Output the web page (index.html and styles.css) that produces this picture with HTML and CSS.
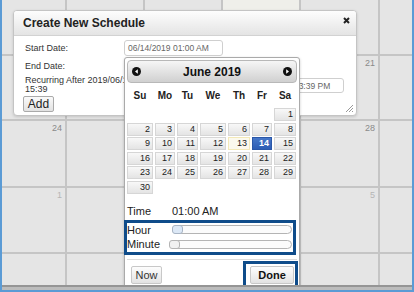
FILE: index.html
```html
<!DOCTYPE html>
<html lang="en">
<head>
    <meta charset="UTF-8">
    <title>Create New Schedule</title>
    <link rel="stylesheet" href="styles.css">
</head>
<body>
    <div class="screen">
        <!-- Calendrier du mois en fond -->
        <div class="month-grid">
            <div class="cell"></div><div class="cell"></div><div class="cell"></div><div class="cell today"></div><div class="cell"></div><div class="cell"></div>
            <div class="cell"></div><div class="cell"></div><div class="cell"></div><div class="cell"></div><div class="cell">21</div><div class="cell"></div>
            <div class="cell">24</div><div class="cell"></div><div class="cell"></div><div class="cell"></div><div class="cell">28</div><div class="cell"></div>
            <div class="cell muted">1</div><div class="cell"></div><div class="cell"></div><div class="cell"></div><div class="cell muted">5</div><div class="cell"></div>
            <div class="cell"></div><div class="cell"></div><div class="cell"></div><div class="cell"></div><div class="cell"></div><div class="cell"></div>
        </div>
        <div class="bottom-bar"></div>

        <!-- Dialogue -->
        <div class="dialog">
            <div class="dialog-title">
                <span>Create New Schedule</span>
                <svg class="close" width="7" height="7" viewBox="0 0 7 7"><path d="M1 1L6 6M6 1L1 6" stroke="#222" stroke-width="2"/></svg>
            </div>
            <div class="dialog-body">
                <div class="form-row">
                    <label>Start Date:</label>
                    <div class="input">06/14/2019 01:00 AM</div>
                </div>
                <div class="form-row">
                    <label>End Date:</label>
                    <div class="input"></div>
                </div>
                <div class="form-row recurring">
                    <label>Recurring After 2019/06/14 15:39</label>
                    <div class="input small">06/14/2019 03:39 PM</div>
                </div>
                <button class="add-btn">Add</button>
            </div>
            <svg class="grip" width="8" height="8" viewBox="0 0 8 8"><path d="M8 1L1 8M8 4L4 8M8 7L7 8" stroke="#999" stroke-width="1"/></svg>
        </div>

        <!-- Datepicker -->
        <div class="datepicker">
            <div class="dp-header">
                <svg width="9" height="9" viewBox="0 0 9 9"><circle cx="4.5" cy="4.5" r="4.5" fill="#111"/><path d="M5.8 2.3L3 4.5L5.8 6.7Z" fill="#fff"/></svg>
                <span>June 2019</span>
                <svg width="9" height="9" viewBox="0 0 9 9"><circle cx="4.5" cy="4.5" r="4.5" fill="#111"/><path d="M3.2 2.3L6 4.5L3.2 6.7Z" fill="#fff"/></svg>
            </div>
            <div class="dp-weekdays">
                <span>Su</span><span>Mo</span><span>Tu</span><span>We</span><span>Th</span><span>Fr</span><span>Sa</span>
            </div>
            <div class="dp-days">
                <span class="empty"></span><span class="empty"></span><span class="empty"></span><span class="empty"></span><span class="empty"></span><span class="empty"></span><span>1</span>
                <span>2</span><span>3</span><span>4</span><span>5</span><span>6</span><span>7</span><span>8</span>
                <span>9</span><span>10</span><span>11</span><span>12</span><span class="today">13</span><span class="active">14</span><span>15</span>
                <span>16</span><span>17</span><span>18</span><span>19</span><span>20</span><span>21</span><span>22</span>
                <span>23</span><span>24</span><span>25</span><span>26</span><span>27</span><span>28</span><span>29</span>
                <span>30</span>
            </div>
            <div class="time-row">
                <span class="time-label">Time</span>
                <span>01:00 AM</span>
            </div>
            <div class="highlight sliders">
                <div class="slider-row">
                    <span class="time-label">Hour</span>
                    <div class="track"><span class="handle hour"></span></div>
                </div>
                <div class="slider-row">
                    <span class="time-label">Minute</span>
                    <div class="track"><span class="handle minute"></span></div>
                </div>
            </div>
            <div class="dp-buttons">
                <button class="dp-btn now">Now</button>
                <div class="highlight done-box">
                    <button class="dp-btn done">Done</button>
                </div>
            </div>
        </div>
    </div>
</body>
</html>
```

FILE: styles.css
```css
/* Styles globaux */
body, html {
    margin: 0;
    padding: 0;
    font-family: 'Liberation Sans', Arial, sans-serif;
    color: #222;
}

.screen {
    position: relative;
    width: 414px;
    height: 292px;
    box-sizing: border-box;
    border: 2px solid #5b9bd5;
    border-top: none;
    display: flex;
    flex-direction: column;
    overflow: hidden;
}

/* Calendrier en fond */
.month-grid {
    flex: 1;
    display: grid;
    grid-template-columns: 63px 76px 76px 76px 77px 1fr;
    grid-template-rows: 54px 63px 65px 64px 1fr;
    gap: 2px;
    background: #c5c5c5;
}

.cell {
    background: #e5e5e5;
    text-align: right;
    font-size: 9px;
    line-height: 10px;
    padding: 2px 3px 0 0;
    color: #8a8a8a;
}

.cell.today {
    background: #efefea;
}

.cell.muted {
    color: #b5b5b5;
}

.bottom-bar {
    position: relative;
    z-index: 5;
    height: 5px;
    box-sizing: border-box;
    border-top: 2px solid #959595;
    background: #bcbcbc;
}

/* Dialogue */
.dialog {
    position: absolute;
    left: 11px;
    top: 10px;
    width: 344px;
    height: 106px;
    box-sizing: border-box;
    background: #fff;
    border: 1px solid #c4c4c4;
    border-radius: 4px;
    box-shadow: 0 1px 3px rgba(0, 0, 0, 0.15);
    z-index: 2;
}

.dialog-title {
    display: flex;
    justify-content: space-between;
    align-items: center;
    height: 24px;
    padding: 0 6px 0 9px;
    background: linear-gradient(#fdfdfd, #e4e4e4);
    border-bottom: 1px solid #d2d2d2;
    border-radius: 3px 3px 0 0;
    font-size: 12px;
    font-weight: bold;
    color: #222;
}

.close {
    margin-bottom: 6px;
}

.dialog-body {
    padding: 4px 10px 0 11px;
    font-size: 9px;
    color: #333;
}

.form-row {
    display: flex;
    align-items: center;
    height: 16px;
    margin-bottom: 2px;
}

.form-row label {
    width: 99px;
}

.input {
    width: 99px;
    height: 16px;
    box-sizing: border-box;
    border: 1px solid #cfcfcf;
    border-radius: 3px;
    padding: 0 3px;
    line-height: 14px;
    color: #666;
    font-size: 8.5px;
    white-space: nowrap;
    overflow: hidden;
}

.recurring {
    height: 20px;
    margin-top: -1px;
    margin-bottom: 1px;
}

.recurring label {
    width: 118px;
    flex-shrink: 0;
    line-height: 9.5px;
}

.input.small {
    height: 15px;
    margin-left: 102px;
}

.add-btn {
    display: block;
    margin: 0 0 0 -2px;
    width: 31px;
    height: 16px;
    padding: 0;
    font-family: inherit;
    font-size: 12px;
    color: #222;
    background: linear-gradient(#fafafa, #e2e2e2);
    border: 1px solid #aaa;
    border-radius: 2px;
}

.grip {
    position: absolute;
    right: 3px;
    bottom: 3px;
}

/* Datepicker */
.datepicker {
    position: absolute;
    left: 122px;
    top: 57px;
    width: 176px;
    height: 240px;
    box-sizing: border-box;
    padding: 2px;
    background: #fff;
    border: 1px solid #aaa;
    border-radius: 3px;
    box-shadow: 0 1px 3px rgba(0, 0, 0, 0.2);
    z-index: 3;
}

.dp-header {
    display: flex;
    justify-content: space-between;
    align-items: center;
    height: 23px;
    box-sizing: border-box;
    padding: 0 4px;
    border: 1px solid #b8b8b8;
    border-radius: 4px;
    background: linear-gradient(#f6f6f6, #d0d0d0);
    font-size: 12px;
    font-weight: bold;
    color: #111;
}

.dp-weekdays,
.dp-days {
    display: grid;
    grid-template-columns: 26px 20px 21px 26px 22px 20px 22px;
    column-gap: 2px;
}

.dp-weekdays {
    height: 22px;
    margin-top: 1px;
    align-items: center;
    text-align: center;
    font-size: 10px;
    font-weight: bold;
    color: #222;
}

.dp-days {
    margin-top: 2px;
    grid-auto-rows: 13px;
    row-gap: 1.5px;
}

.dp-days span {
    box-sizing: border-box;
    border: 1px solid #d6d6d6;
    background: linear-gradient(#f8f8f8, #e4e4e4);
    text-align: right;
    padding-right: 2px;
    font-size: 9px;
    line-height: 11px;
    color: #222;
}

.dp-days span.empty {
    border: none;
    background: none;
}

.dp-days span.today {
    background: #fbf9ee;
    border-color: #f3e9b8;
}

.dp-days span.active {
    background: linear-gradient(#4677c8, #2d5db5);
    border-color: #2a57a8;
    color: #fff;
    font-weight: bold;
}

.time-row {
    display: flex;
    height: 14px;
    margin-top: 10px;
    align-items: center;
    font-size: 11px;
    color: #222;
}

.time-label {
    width: 45px;
    flex-shrink: 0;
}

/* Cadres bleus */
.highlight {
    border: 3px solid #0f4c8a;
}

.sliders {
    width: 172px;
    box-sizing: border-box;
    margin: 2px 0 0 -3px;
    font-size: 11px;
    color: #222;
}

.slider-row {
    display: flex;
    align-items: center;
    height: 14.5px;
}

.track {
    position: relative;
    width: 120px;
    height: 9px;
    box-sizing: border-box;
    border: 1px solid #b4b4b4;
    border-radius: 5px;
    background: #fbfbfb;
}

.handle {
    position: absolute;
    top: -1px;
    width: 11px;
    height: 9px;
    box-sizing: border-box;
    border: 1px solid #a8b4c4;
    border-radius: 3px;
}

.handle.hour {
    left: -1px;
    background: #dce8f6;
}

.handle.minute {
    left: -4px;
    background: #f1f1f1;
    border-color: #b4b4b4;
}

.dp-buttons {
    display: flex;
    justify-content: space-between;
    align-items: flex-start;
    margin-top: 4px;
    border-top: 1px solid #dcdcdc;
}

.dp-btn {
    height: 18px;
    padding: 0;
    font-family: inherit;
    font-size: 11px;
    color: #333;
    background: linear-gradient(#fdfdfd, #e3e3e3);
    border: 1px solid #c8c8c8;
    border-radius: 2px;
}

.now {
    width: 31px;
    margin: 6px 0 0 4px;
}

.done-box {
    margin: 1px -1px 0 0;
    padding: 2px 1px 2px 4px;
    background: #fff;
}

.done {
    display: block;
    width: 44px;
    font-weight: bold;
    color: #111;
}
```
